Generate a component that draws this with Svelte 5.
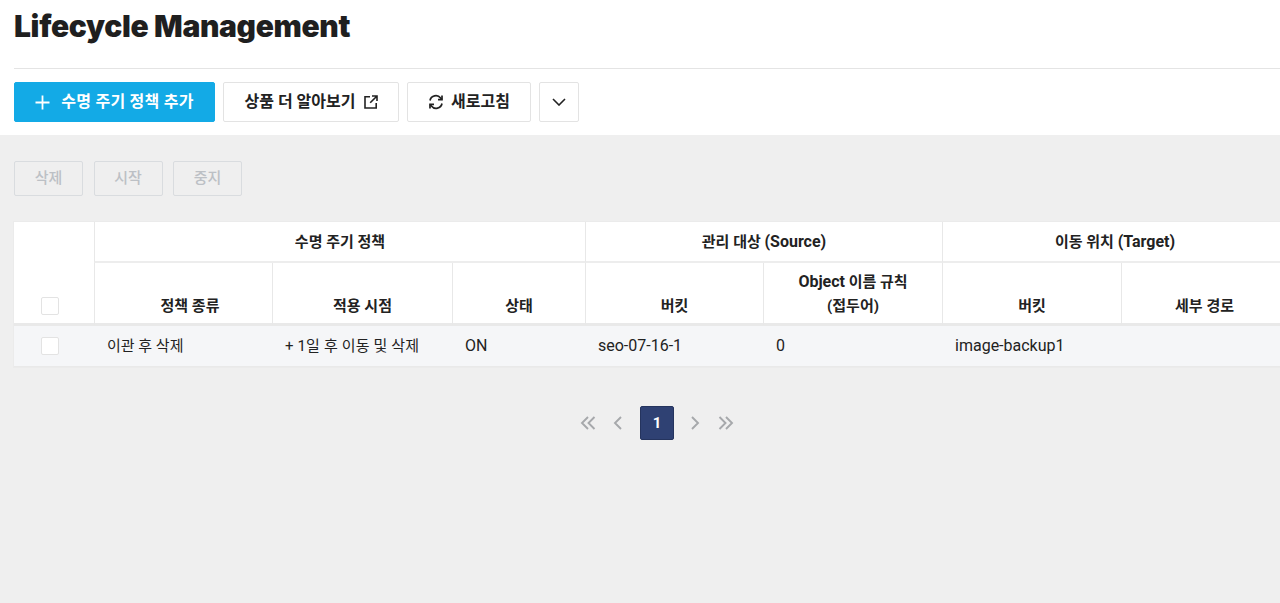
<script>
  const sub = [
    { k: '정책 종류', cls: 'shift' }, { k: '적용 시점' }, { k: '상태' }, { k: '버킷' },
    { l: 'Object', k: ' 이름 규칙', k2: '(접두어)' }, { k: '버킷' }, { k: '세부 경로' }
  ];
  const cells = [
    { t: '이관 후 삭제' }, { t: '+ 1일 후 이동 및 삭제', cls: 'mix' }, { t: 'ON', cls: 'lat' },
    { t: 'seo-07-16-1', cls: 'lat' }, { t: '0', cls: 'lat' }, { t: 'image-backup1', cls: 'lat' }, { t: '' }
  ];
</script>

<div class="page">
  <header class="head">
    <h1>Lifecycle Management</h1>
    <div class="actions">
      <button class="btn primary">
        <svg width="15" height="15" viewBox="0 0 15 15"><path d="M7.5 0.5v14M0.5 7.5h14" stroke="#fff" stroke-width="1.8" fill="none"/></svg>
        <span>수명 주기 정책 추가</span>
      </button>
      <button class="btn learn">
        <span>상품 더 알아보기</span>
        <svg width="14" height="14" viewBox="0 0 14 14" fill="none" stroke="#222" stroke-width="1.6"><path d="M6 1.8H1v11.2h11.2V8"/><path d="M8 1h5v5M13 1L6.2 7.8"/></svg>
      </button>
      <button class="btn refresh">
        <svg width="16" height="16" viewBox="0 0 16 16" fill="none" stroke="#222" stroke-width="1.7"><path d="M2 6.5A6 6 0 0 1 12.6 4L14 5.6"/><path d="M14 1.6v4h-4"/><path d="M14 9.5A6 6 0 0 1 3.4 12L2 10.4"/><path d="M2 14.4v-4h4"/></svg>
        <span>새로고침</span>
      </button>
      <button class="btn more" aria-label="더보기">
        <svg width="14" height="8" viewBox="0 0 14 8" fill="none" stroke="#222" stroke-width="1.6"><path d="M1 1l6 6 6-6"/></svg>
      </button>
    </div>
  </header>

  <main class="body">
    <div class="tools">
      <button class="ghost">삭제</button>
      <button class="ghost">시작</button>
      <button class="ghost">중지</button>
    </div>

    <div class="tablewrap">
      <table>
        <colgroup>
          <col class="c0" /><col class="c1" /><col class="c2" /><col class="c3" />
          <col class="c1" /><col class="c4" /><col class="c4" /><col class="c5" />
        </colgroup>
        <thead>
          <tr class="r1">
            <th rowspan="2" class="chk"><span class="box"></span></th>
            <th colspan="3">수명 주기 정책</th>
            <th colspan="2">관리 대상 <span class="l">(Source)</span></th>
            <th colspan="2">이동 위치 <span class="l">(Target)</span></th>
          </tr>
          <tr class="r2">
            {#each sub as s}
              <th class={s.cls}>{#if s.l}<span class="l">{s.l}</span>{/if}{s.k}{#if s.k2}<br />{s.k2}{/if}</th>
            {/each}
          </tr>
        </thead>
        <tbody>
          <tr>
            <td class="chk"><span class="box"></span></td>
            {#each cells as c}
              <td class={c.cls}>{c.t}</td>
            {/each}
          </tr>
        </tbody>
      </table>
    </div>

    <nav class="pager">
      <svg width="16" height="14" viewBox="0 0 16 14" fill="none" stroke="#a6a8ab" stroke-width="1.9"><path d="M8 1L2 7l6 6M14.5 1l-6 6 6 6"/></svg>
      <svg class="prev" width="9" height="14" viewBox="0 0 9 14" fill="none" stroke="#a6a8ab" stroke-width="1.9"><path d="M8 1L2 7l6 6"/></svg>
      <span class="cur">1</span>
      <svg class="next" width="9" height="14" viewBox="0 0 9 14" fill="none" stroke="#a6a8ab" stroke-width="1.9"><path d="M1 1l6 6-6 6"/></svg>
      <svg class="last" width="16" height="14" viewBox="0 0 16 14" fill="none" stroke="#a6a8ab" stroke-width="1.9"><path d="M1.5 1l6 6-6 6M8 1l6 6-6 6"/></svg>
    </nav>
  </main>
</div>

<style>
  :global(body) { margin: 0; overflow: hidden; }
  .page {
    width: 1280px; height: 603px; background: #efefef; overflow: hidden;
    font-family: Roboto, "Noto Sans CJK KR", sans-serif; color: #222;
    display: flex; flex-direction: column;
  }
  .head { background: #fff; padding-left: 14px; height: 135px; box-sizing: border-box; }
  h1 {
    margin: 0; height: 69px; box-sizing: border-box; padding-top: 5px;
    font: 900 30px/42px Inter, sans-serif; letter-spacing: -0.35px; color: #1f1f1f;
    border-bottom: 1px solid #e4e4e4;
  }
  .actions { display: flex; gap: 8px; padding-top: 13px; }
  .btn {
    height: 40px; box-sizing: border-box; border: 1px solid #e3e3e3; border-radius: 2px; background: #fff;
    font: 700 16px/1 Roboto, "Noto Sans CJK KR", sans-serif; color: #222; letter-spacing: 0;
    display: flex; align-items: center; justify-content: center; padding: 0;
  }
  .primary { width: 201px; background: #13aae6; border-color: #13aae6; color: #fff; gap: 11px; letter-spacing: 0.25px; }
  .learn { width: 176px; gap: 8px; }
  .refresh { width: 124px; gap: 7px; }
  .more { width: 40px; }
  .body { flex: 1; padding: 26px 0 0 14px; }
  .tools { display: flex; gap: 10.5px; }
  .ghost {
    width: 69px; height: 35px; padding: 0 0 5px; box-sizing: border-box; background: #efefef;
    border: 1px solid #d9dcdf; border-radius: 2px; color: #bcc0c5;
    font: 500 15px/1 "Noto Sans CJK KR", sans-serif;
  }
  .tablewrap { margin-top: 26px; width: 1266px; overflow: hidden; box-shadow: 0 0 0 1px #ebebeb; }
  table { border-collapse: separate; border-spacing: 0; table-layout: fixed; width: 1273px; }
  .c0 { width: 80px; }
  .c1 { width: 178px; }
  .c2 { width: 180px; }
  .c3 { width: 133px; }
  .c4 { width: 179px; }
  .c5 { width: 166px; }
  th {
    background: #fff; font: 700 15px/24px Roboto, "Noto Sans CJK KR", sans-serif; color: #222;
    text-align: center; vertical-align: middle; padding: 0;
    border-left: 1px solid #e8e8e8; box-sizing: border-box;
  }
  th.chk { border-left: 0; vertical-align: bottom; padding: 0 8px 6px 0; }
  .l { font-size: 16px; }
  .r1 th { height: 41px; border-bottom: 2px solid #ededed; padding-top: 1px; }
  .r1 th.chk { border-bottom: 3px solid #e9e9e9; }
  .r2 th { height: 63px; vertical-align: bottom; padding-bottom: 5px; border-bottom: 3px solid #e9e9e9; }
  .r2 th.shift { padding-left: 13px; }
  td {
    height: 41px; background: #f5f6f8; padding: 0 0 0 13px; box-sizing: border-box;
    font: 400 15px/1 Roboto, "Noto Sans CJK KR", sans-serif; color: #222;
    border-bottom: 1px solid #e9e9e9; white-space: nowrap;
  }
  td.lat { font-size: 16px; }
  td.mix { letter-spacing: 0.15px; }
  td.chk { padding: 0 8px 0 0; text-align: center; }
  .box {
    display: inline-block; width: 18px; height: 18px; background: #fff; box-sizing: border-box;
    border: 1px solid #e3e3e3; border-radius: 2px; vertical-align: middle;
  }
  .pager { display: flex; align-items: center; margin-top: 39px; padding-left: 566px; }
  .prev { margin-left: 17px; }
  .next { margin-left: 17px; }
  .last { margin-left: 18px; }
  .cur {
    width: 34px; height: 34px; box-sizing: border-box; margin-left: 18px; background: #2f4173;
    border: 1px solid #25345e; border-radius: 2px; color: #fff; font: 700 15px/32px Roboto, sans-serif; text-align: center;
  }
</style>
